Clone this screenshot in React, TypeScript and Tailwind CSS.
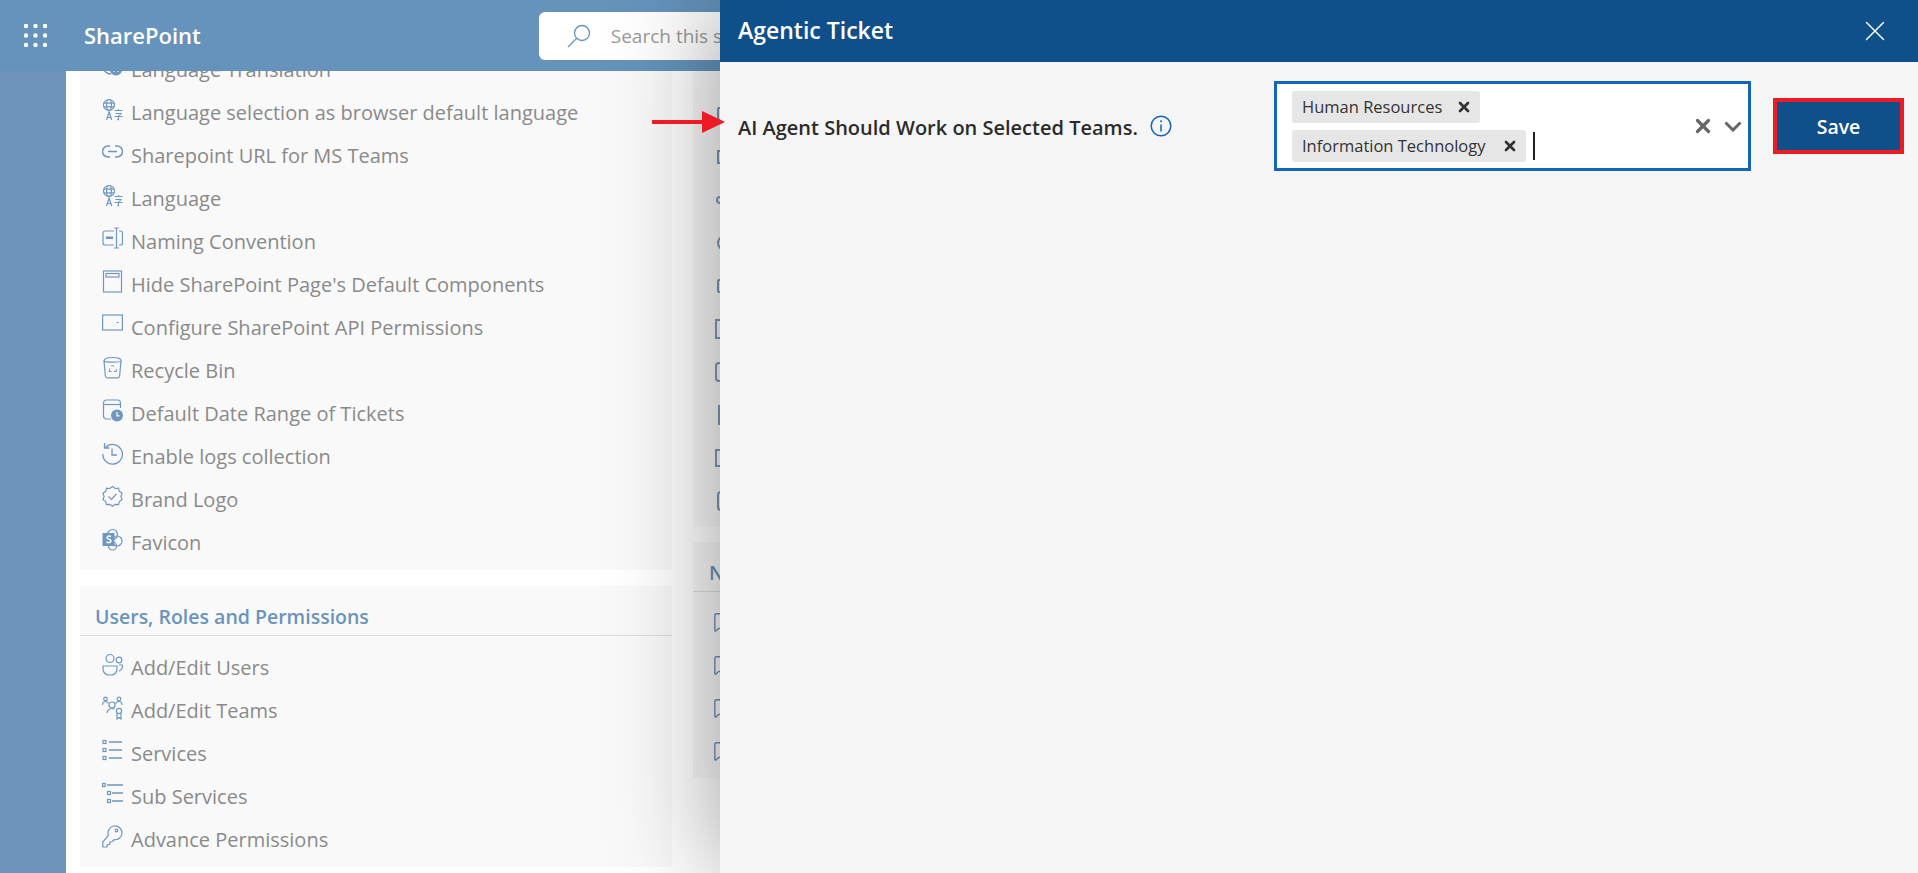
import type { ReactNode } from "react";
import { MessageSquare, X } from "lucide-react";

const FONT = "font-['Open_Sans','Noto_Sans',sans-serif]";

function Ico({ children }: { children: ReactNode }) {
  return (
    <svg
      viewBox="0 0 21 24"
      width="21"
      height="24"
      fill="none"
      stroke="#6e97c0"
      strokeWidth="1.2"
      className="-mt-[5px] shrink-0"
    >
      {children}
    </svg>
  );
}

const Translate = () => (
  <Ico>
    <circle cx="7" cy="7" r="5.500" />
    <ellipse cx="7" cy="7" rx="2.400" ry="5.500" />
    <path d="M1.500 5.200h11M1.500 8.800h11" />
    <path d="M4.500 22l2.600-8 2.600 8M5.400 19.500h3.600" />
    <path d="M12.500 12.500h8M16.500 11v2M13.500 15.500h6l-2.500 2M12.500 18.500h8M16.500 17.500v4.500l-1.500-.5" strokeWidth="1" />
  </Ico>
);

const TranslationCircle = () => (
  <Ico>
    <path d="M9 3a8 8 0 1 0 0 16" strokeWidth="1.400" />
    <circle cx="14" cy="14" r="6.500" fill="#6e97c0" stroke="none" />
    <path d="M11.500 11.500l5 5M16.500 11.500l-5 5" stroke="#fff" />
  </Ico>
);

const LinkIco = () => (
  <Ico>
    <path d="M8 5H6a5.500 5.500 0 0 0 0 11h2M13 5h2a5.500 5.500 0 0 1 0 11h-2" strokeWidth="1.500" />
    <path d="M6 10.500h9" strokeWidth="1.500" />
  </Ico>
);

const Naming = () => (
  <Ico>
    <path d="M12 4H3a2 2 0 0 0-2 2v10a2 2 0 0 0 2 2h9M17 4h1.500a2 2 0 0 1 2 2v10a2 2 0 0 1-2 2H17" />
    <path d="M12 1h5M12 21h5M14.500 1v20" />
    <rect x="4" y="9.500" width="7" height="2.500" fill="#6e97c0" stroke="none" />
  </Ico>
);

const WindowIco = () => (
  <Ico>
    <rect x="1.500" y="1" width="18" height="21" />
    <rect x="4" y="3.500" width="13" height="3.500" />
  </Ico>
);

const Panel = () => (
  <Ico>
    <rect x="0.600" y="2" width="19.800" height="15" />
    <path d="M14 9h3l-1.500 1.500z" fill="#6e97c0" stroke="none" />
  </Ico>
);

const Recycle = () => (
  <Ico>
    <path d="M2 5l1.400 15a2 2 0 0 0 2 1.800h10.200a2 2 0 0 0 2-1.800L19 5" />
    <path d="M2 5c0-3 4-3.500 8.500-3.500S19 2 19 5c0 1.500-17 1.500-17 0z" />
    <path d="M9 10.500l1.500-1.500 1.500 2M14 13l.5 2.500h-2.500M9.500 15.500H7l1-3" strokeWidth="1" />
  </Ico>
);

const DateClock = () => (
  <Ico>
    <path d="M9 20H4.500a3 3 0 0 1-3-3V4a3 3 0 0 1 3-3h11a3 3 0 0 1 3 3v5" />
    <path d="M1.500 5.500h17" />
    <circle cx="15" cy="16.500" r="6" fill="#6e97c0" stroke="none" />
    <path d="M15 13v3.800h2.500" stroke="#fff" />
  </Ico>
);

const History = () => (
  <Ico>
    <path d="M3.500 5.500A9.800 9.800 0 1 1 .8 12" strokeWidth="1.300" />
    <path d="M2.500 1v5h5" strokeWidth="1.300" />
    <path d="M10 6.500V13h5" strokeWidth="1.300" />
  </Ico>
);

const Badge = () => (
  <Ico>
    <path d="M10.500 1.500l2.700 2 3.300-.4.800 3.200 2.800 1.900-1.200 3.200 1.200 3.200-2.800 1.900-.8 3.200-3.300-.4-2.700 2-2.700-2-3.300.4-.8-3.200L.9 14.600l1.200-3.200L.9 8.200l2.800-1.900.8-3.200 3.300.4z" />
    <path d="M6.500 11.500l3 3 5-5.500" />
  </Ico>
);

const SpFavicon = () => (
  <Ico>
    <circle cx="10.500" cy="6.500" r="5" />
    <circle cx="15" cy="13" r="5" />
    <circle cx="10.500" cy="18" r="4" />
    <rect x="0.500" y="5" width="12" height="13" fill="#6e97c0" stroke="none" />
    <path d="M9 8.500c-2-1-4-.5-4 1 0 2 4 1.500 4 3.500 0 1.700-2.500 2-4.500 1" stroke="#fff" strokeWidth="1.400" />
  </Ico>
);

const Users = () => (
  <Ico>
    <circle cx="8" cy="5.500" r="4" />
    <circle cx="17" cy="7" r="2.800" />
    <path d="M1 13h14v3a6 6 0 0 1-6 6H7a6 6 0 0 1-6-6z" />
    <path d="M17 12h3.500v1a5 5 0 0 1-3.500 5" />
  </Ico>
);

const Teams = () => (
  <Ico>
    <circle cx="3.500" cy="3" r="1.800" />
    <circle cx="17" cy="3" r="1.800" />
    <circle cx="10" cy="9" r="3" />
    <circle cx="17" cy="15" r="2.600" />
    <path d="M.5 9c0-2 1-3.500 3-3.500 1.500 0 2.500.5 3 2M13.500 7.500c.5-1.500 1.500-2 3.500-2s3 1.500 3 3.500M5 17c0-2 2-4.500 5-4.500 1 0 1.800.3 2.500.7M15 17.500V23l2-1.500 2 1.500v-5.500" />
  </Ico>
);

const Bullets = () => (
  <Ico>
    <path d="M7 3h13M7 11h13M7 19h13" strokeWidth="1.300" />
    <rect x="1" y="1.500" width="3" height="3" />
    <rect x="1" y="9.500" width="3" height="3" />
    <rect x="1" y="17.500" width="3" height="3" />
  </Ico>
);

const SubBullets = () => (
  <Ico>
    <path d="M5 3h16M10 11h11M10 19h11" strokeWidth="1.300" />
    <rect x="0.600" y="1.500" width="2.500" height="3" />
    <rect x="5.500" y="9.500" width="3" height="3" />
    <rect x="5.500" y="17.500" width="3" height="3" />
  </Ico>
);

const KeyIco = () => (
  <Ico>
    <path d="M20 8a7 7 0 1 0-13.500 2.500L.8 17v5h4.400v-2.500h2.500V17h2l2.500-2.300A7 7 0 0 0 20 8z" />
    <circle cx="14.500" cy="5.500" r="1.300" />
  </Ico>
);

const generalRows: [string, () => ReactNode][] = [
  ["Language Translation", TranslationCircle],
  ["Language selection as browser default language", Translate],
  ["Sharepoint URL for MS Teams", LinkIco],
  ["Language", Translate],
  ["Naming Convention", Naming],
  ["Hide SharePoint Page's Default Components", WindowIco],
  ["Configure SharePoint API Permissions", Panel],
  ["Recycle Bin", Recycle],
  ["Default Date Range of Tickets", DateClock],
  ["Enable logs collection", History],
  ["Brand Logo", Badge],
  ["Favicon", SpFavicon],
];

const userRows: [string, () => ReactNode][] = [
  ["Add/Edit Users", Users],
  ["Add/Edit Teams", Teams],
  ["Services", Bullets],
  ["Sub Services", SubBullets],
  ["Advance Permissions", KeyIco],
];

// only the left edge of these shows beside the panel
const hiddenIcons = [
  "ml-[2px] h-[14px] w-[12px] rounded-[2px]",
  "ml-[2px] h-[14px] w-[16px]",
  "ml-[1px] h-[8px] w-[12px] rounded-full",
  "ml-[2px] h-[16px] w-[16px] rounded-full",
  "ml-[2px] h-[14px] w-[14px] rounded-[2px]",
  "h-[20px] w-[18px]",
  "h-[20px] w-[18px] rounded-[4px]",
  "ml-[3px] h-[20px] w-[16px]",
  "h-[18px] w-[18px]",
  "ml-[2px] h-[20px] w-[16px] rounded-[4px]",
];

function Row({ label, icon: Icon }: { label: string; icon: () => ReactNode }) {
  return (
    <div className="flex h-[43px] items-center gap-2 pl-[22px] text-[20px] text-[#8a8a8a]">
      <Icon />
      <span className="whitespace-nowrap">{label}</span>
    </div>
  );
}

function HiddenRow({ children }: { children: ReactNode }) {
  return <div className="flex h-[43px] items-center pl-[22px] text-[#6f8fb0]">{children}</div>;
}

function SectionHead({ title, left = "pl-[18px]" }: { title: string; left?: string }) {
  return (
    <div className={`flex h-[50px] items-center border-b border-[#dcdcdc] pt-[12px] text-[19.5px] font-semibold text-[#6a94bb] ${left}`}>
      <span className="whitespace-nowrap">{title}</span>
    </div>
  );
}

export default function App() {
  return (
    <div className={`relative h-[873px] w-full overflow-hidden bg-[#6e94bb] ${FONT}`}>
      <header className="relative z-10 flex h-[71px] items-center bg-[#6593bb]">
        <svg viewBox="0 0 23 23" width="23" height="23" fill="#fff" className="ml-6">
          {[2, 11.5, 21].map((y) =>
            [2, 11.5, 21].map((x) => <circle key={`${x}-${y}`} cx={x} cy={y} r="2.200" />),
          )}
        </svg>
        <span className="ml-[37px] text-[22px] font-semibold text-white">SharePoint</span>
        <div className="ml-[338px] flex h-[48px] w-[400px] items-center rounded-md bg-white pl-[28px]">
          <svg viewBox="0 0 24 24" width="24" height="24" fill="none" stroke="#6593bb" strokeWidth="1.300">
            <circle cx="15" cy="9" r="7.500" />
            <path d="M9.500 14.500L1 23" />
          </svg>
          <span className="ml-[20px] whitespace-nowrap pt-[2px] text-[19px] text-[#9a9a9a]">Search this site</span>
        </div>
      </header>

      <main className="ml-[66px] -mt-[23px] flex h-[825px] gap-[21px] bg-white pl-[14px]">
        <div className="flex w-[592px] shrink-0 flex-col gap-4">
          <section className="bg-[#f9f9f9] pb-[6px]">
            {generalRows.map(([label, icon]) => (
              <Row key={label} label={label} icon={icon} />
            ))}
          </section>
          <section className="bg-[#f9f9f9] pb-[6px]">
            <SectionHead title="Users, Roles and Permissions" left="pl-[15px]" />
            <div className="pt-[10px]">
              {userRows.map(([label, icon]) => (
                <Row key={label} label={label} icon={icon} />
              ))}
            </div>
          </section>
        </div>

        <div className="flex w-[400px] shrink-0 flex-col gap-[15px]">
          <section className="h-[479px] bg-[#f9f9f9] pt-[44px]">
            {hiddenIcons.map((shape) => (
              <HiddenRow key={shape}>
                <span className={`border-2 border-[#7d9ab8] ${shape}`} />
              </HiddenRow>
            ))}
          </section>
          <section className="bg-[#f9f9f9] pb-[6px]">
            <SectionHead title="Notifications" left="pl-[16px]" />
            <div className="pt-[8px]">
              {[0, 1, 2, 3].map((i) => (
                <HiddenRow key={i}>
                  <MessageSquare size={22} strokeWidth={1.500} className="-ml-[2px]" />
                </HiddenRow>
              ))}
            </div>
          </section>
        </div>
      </main>

      <aside className="absolute right-0 top-0 z-20 h-full w-[1198px] bg-[#f5f5f5] shadow-[0_0_100px_rgba(0,0,0,0.4)]">
        <div className="flex h-[62px] items-center justify-between bg-[#0f4f8a] pl-[18px] pr-[26px]">
          <h1 className="pb-[2px] text-[23px] font-semibold text-white">Agentic Ticket</h1>
          <X size={34} strokeWidth={1} className="text-white" />
        </div>

        <div className="flex items-center pl-[18px] pr-[14px] pt-[19px]">
          <span className="mt-[3px] whitespace-nowrap text-[20px] font-semibold text-[#2b2b2b]">
            AI Agent Should Work on Selected Teams.
          </span>
          <svg viewBox="0 0 22 22" width="22" height="22" fill="none" stroke="#1565b5" strokeWidth="1.500" className="ml-3 -mt-[1px]">
            <circle cx="11" cy="11" r="9.800" />
            <path d="M11 9.500v7" />
            <circle cx="11" cy="6.300" r="1" fill="#1565b5" stroke="none" />
          </svg>

          <div className="ml-auto flex h-[90px] w-[477px] items-center border-[3px] border-[#1565b8] bg-white pl-[15px] pr-[6px]">
            <div className="flex flex-1 flex-col gap-[7px]">
              <span className="flex h-[32px] w-[188px] items-center justify-between whitespace-nowrap rounded-[3px] bg-[#e6e6e6] pl-[10px] pr-[8px] pt-[1px] text-[16.5px] text-[#333]">
                Human Resources
                <X size={16} strokeWidth={4} />
              </span>
              <div className="flex items-center">
                <span className="flex h-[32px] w-[234px] items-center justify-between whitespace-nowrap rounded-[3px] bg-[#e6e6e6] pl-[10px] pr-[8px] pt-[1px] text-[16.5px] text-[#333]">
                  Information Technology
                  <X size={16} strokeWidth={4} />
                </span>
                <span className="ml-[7px] h-[28px] w-[2px] bg-[#222]" />
              </div>
            </div>
            <X size={22} strokeWidth={3.500} className="text-[#666]" />
            <svg viewBox="0 0 18 11" width="18" height="11" fill="none" stroke="#666" strokeWidth="3" className="ml-[10px]">
              <path d="M1.500 1.500L9 9l7.500-7.500" />
            </svg>
          </div>

          <button className="ml-[22px] h-[56px] w-[131px] border-4 border-[#ed1c24] bg-[#0f4f8a] pt-[1px] text-[19.5px] font-semibold text-white">
            Save
          </button>
        </div>
      </aside>

      <svg viewBox="0 0 73 22" width="73" height="22" fill="#ed1c24" className="absolute left-[652px] top-[111px] z-30">
        <path d="M0 9h50V0l23 11-23 11v-9H0z" />
      </svg>
    </div>
  );
}
